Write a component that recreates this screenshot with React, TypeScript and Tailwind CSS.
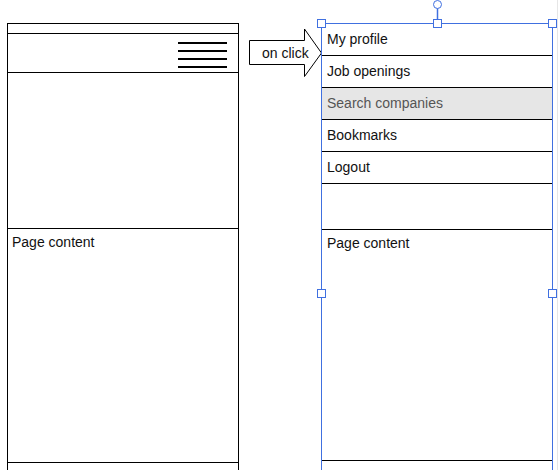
const MENU = ['My profile', 'Job openings', 'Search companies', 'Bookmarks', 'Logout']

const BLUE = '#4070e0'

function Handle({ x, y }: { x: number; y: number }) {
  return <rect x={x - 4} y={y - 4} width={8} height={8} fill="#fff" stroke={BLUE} strokeWidth={1} />
}

function LeftFrame() {
  return (
    <div className="absolute left-[7px] top-[23px] flex h-[470px] w-[232px] flex-col border border-black">
      <div className="h-[10px] border-b border-black" />
      <div className="flex h-[39px] flex-col items-end gap-[6px] border-b border-black pr-[11px] pt-[8px]">
        <div className="h-[2px] w-[49px] bg-black" />
        <div className="h-[2px] w-[49px] bg-black" />
        <div className="h-[2px] w-[49px] bg-black" />
        <div className="h-[2px] w-[49px] bg-black" />
      </div>
      <div className="h-[156px] border-b border-black" />
      <div className="h-[234px] border-b border-black px-[4px] pt-[5px] text-[14px] leading-[16px] text-[#111]">
        Page content
      </div>
      <div className="flex-1" />
    </div>
  )
}

function RightFrame() {
  return (
    <div className="absolute left-[321px] top-[23px] flex h-[470px] w-[232px] flex-col border border-black">
      {MENU.map((item) => (
        <div
          key={item}
          className={
            item === 'Search companies'
              ? 'flex h-[32px] items-center border-b border-black bg-[#e6e6e6] px-[5px] text-[14px] text-[#555]'
              : 'flex h-[32px] items-center border-b border-black px-[5px] text-[14px] text-[#111]'
          }
        >
          {item}
        </div>
      ))}
      <div className="h-[46px] border-b border-black" />
      <div className="h-[231px] border-b border-black px-[5px] pt-[5px] text-[14px] leading-[16px] text-[#111]">
        Page content
      </div>
      <div className="flex-1" />
    </div>
  )
}

export default function App() {
  return (
    <div
      className="relative h-[470px] w-[559px] overflow-hidden bg-white"
      style={{ fontFamily: '"Liberation Sans", Arial, sans-serif' }}
    >
      <LeftFrame />
      <RightFrame />

      {/* arrow, selection box and handles */}
      <svg className="pointer-events-none absolute left-0 top-0" width={559} height={470}>
        <polygon
          points="249.5,40.5 304.5,40.5 304.5,29 321.5,53 304.5,76.5 304.5,64.5 249.5,64.5"
          fill="#fff"
          stroke="#000"
          strokeWidth={1}
        />
        <line x1={557.5} y1={0} x2={557.5} y2={470} stroke="#e6e6e6" />
        <rect x={321.5} y={23.5} width={231} height={460} fill="none" stroke={BLUE} strokeWidth={1} />
        <line x1={437.5} y1={8} x2={437.5} y2={19} stroke={BLUE} strokeWidth={1.5} />
        <circle cx={437.5} cy={4.5} r={4} fill="#fff" stroke={BLUE} strokeWidth={1} />
        <Handle x={321.5} y={23.5} />
        <Handle x={437.5} y={23.5} />
        <Handle x={552.5} y={23.5} />
        <Handle x={321.5} y={293.5} />
        <Handle x={552.5} y={293.5} />
      </svg>

      <div className="absolute left-[262px] top-[45px] text-[14px] leading-[16px] text-[#111]">on click</div>
    </div>
  )
}
